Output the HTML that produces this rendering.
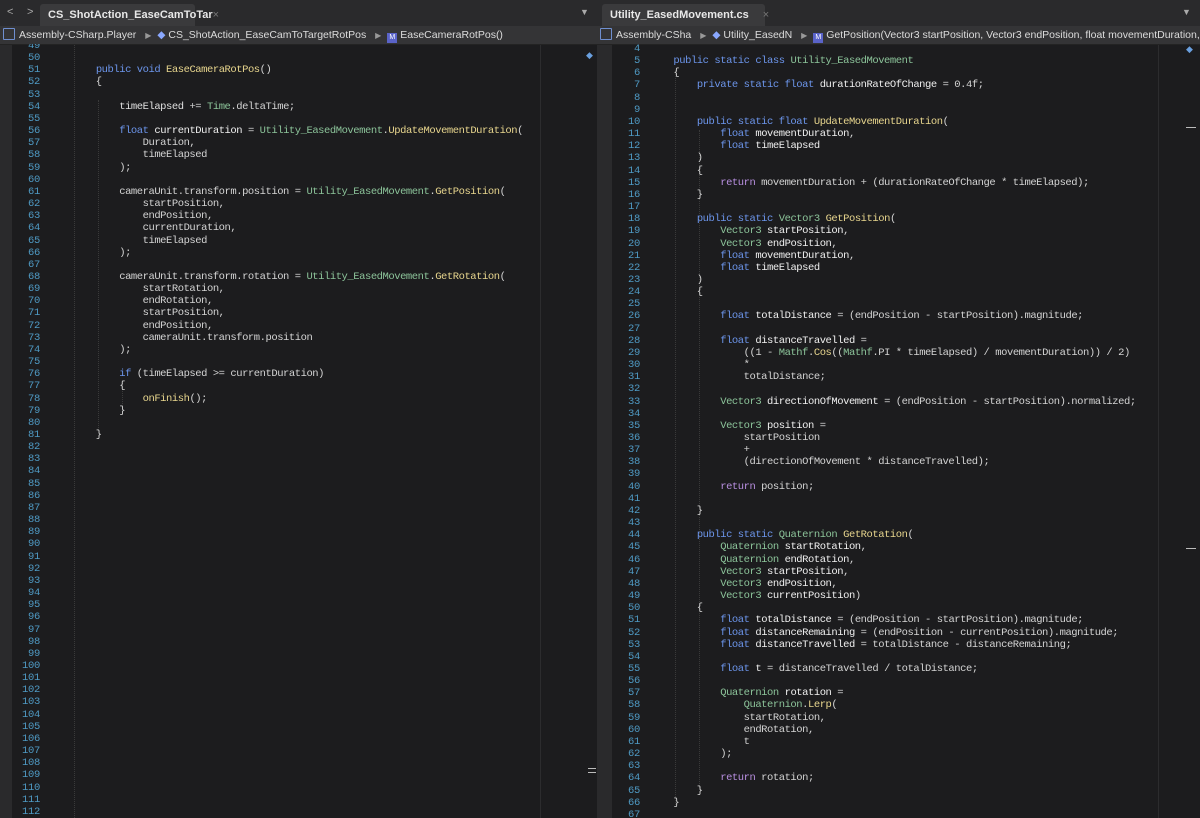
<!DOCTYPE html>
<html><head><meta charset="utf-8"><style>
body{margin:0;width:1200px;height:818px;overflow:hidden;background:#1c1c1e;font-family:"Liberation Sans",sans-serif;position:relative}
.abs{position:absolute}
.tabbar{top:0;height:26px;background:#2a2a2c;border-bottom:1px solid #1a1a1a}
.tab{top:4px;height:22px;background:#3a3a3c;color:#e8e8e8;font-size:11px;font-weight:bold;line-height:22px;padding-left:8px;box-sizing:border-box;border-radius:3px 3px 0 0}
.crumb{top:26px;height:18px;background:#343436;border-bottom:1px solid #232323;color:#dcdcdc;font-size:10.5px;line-height:18px;white-space:nowrap;overflow:hidden}
.code{font-family:"Liberation Mono",monospace;font-size:10.5px;letter-spacing:-0.45px;line-height:12.15px;white-space:pre;color:#d4d4d4}
.ln{color:#4f9ac4;text-align:right;font-family:"Liberation Mono",monospace;font-size:10.5px;letter-spacing:-0.3px;line-height:12.15px;white-space:pre}
.k{color:#6c95eb}.t{color:#8cc49a}.m{color:#e8d68e}.r{color:#b88fe0}.v{color:#f0f0f0}.n{color:#e0e0e0}
.guide{border-left:1px dotted #3a3a3a;width:0}
</style></head><body>
<div class="abs tabbar" style="left:0;width:597px"></div>
<div class="abs" style="left:7px;top:6px;color:#aaa;font-size:11px">&lt;</div>
<div class="abs" style="left:27px;top:6px;color:#aaa;font-size:11px">&gt;</div>
<div class="abs tab" style="left:40px;width:155px">CS_ShotAction_EaseCamToTar<span style="color:#777;font-weight:normal">×</span></div>
<div class="abs" style="left:580px;top:7px;color:#aaa;font-size:9px">▼</div>
<div class="abs tabbar" style="left:597px;width:603px"></div>
<div class="abs tab" style="left:602px;width:163px">Utility_EasedMovement.cs<span style="color:#777;font-weight:normal;margin-left:14px">×</span></div>
<div class="abs" style="left:1182px;top:7px;color:#aaa;font-size:9px">▼</div>
<div class="abs crumb" style="left:0;width:597px"><span style="display:inline-block;width:10px;height:10px;border:1px solid #6f8fd0;margin:0 4px 0 3px;vertical-align:-2px;border-radius:1px"></span>Assembly-CSharp.Player <span style="color:#999;font-size:8px;margin:0 6px">▶</span><span style="color:#8aa8ff">◆</span> CS_ShotAction_EaseCamToTargetRotPos <span style="color:#999;font-size:8px;margin:0 6px">▶</span><span style="display:inline-block;width:10px;height:10px;background:#5a63c8;color:#fff;font-size:7px;line-height:10px;text-align:center;vertical-align:-1px">M</span> EaseCameraRotPos()</div>
<div class="abs crumb" style="left:597px;width:603px"><span style="display:inline-block;width:10px;height:10px;border:1px solid #6f8fd0;margin:0 4px 0 3px;vertical-align:-2px;border-radius:1px"></span>Assembly-CSha <span style="color:#999;font-size:8px;margin:0 6px">▶</span><span style="color:#8aa8ff">◆</span> Utility_EasedN <span style="color:#999;font-size:8px;margin:0 6px">▶</span><span style="display:inline-block;width:10px;height:10px;background:#5a63c8;color:#fff;font-size:7px;line-height:10px;text-align:center;vertical-align:-1px">M</span> GetPosition(Vector3 startPosition, Vector3 endPosition, float movementDuration, float time</div>
<div class="abs" style="left:0;top:45px;width:12px;height:773px;background:#2a2a2c"></div>
<div class="abs" style="left:540px;top:45px;width:1px;height:773px;background:#2c2c2e"></div>
<div class="abs" style="left:597px;top:45px;width:15px;height:773px;background:#2a2a2c"></div>
<div class="abs" style="left:586px;top:50px;color:#6aa0e0;font-size:9px">◆</div>
<div class="abs" style="left:588px;top:768px;width:8px;height:1px;background:#bbb"></div>
<div class="abs" style="left:588px;top:772px;width:8px;height:1px;background:#bbb"></div>
<div class="abs guide" style="left:74px;top:45px;height:773px"></div>
<div class="abs guide" style="left:98px;top:100px;height:330px"></div>
<div class="abs guide" style="left:122px;top:380px;height:30px"></div>
<div style="position:absolute;left:0;top:44px;width:597px;height:774px;overflow:hidden">
<div class="abs ln" style="left:0;top:-4px;width:40px">49
50
51
52
53
54
55
56
57
58
59
60
61
62
63
64
65
66
67
68
69
70
71
72
73
74
75
76
77
78
79
80
81
82
83
84
85
86
87
88
89
90
91
92
93
94
95
96
97
98
99
100
101
102
103
104
105
106
107
108
109
110
111
112
113</div>
<div class="abs code" style="left:49px;top:-4px">

        <span class="k">public void</span> <span class="m">EaseCameraRotPos</span>()
        {

            <span class="n">timeElapsed</span> += <span class="t">Time</span>.deltaTime;

            <span class="k">float</span> <span class="v">currentDuration</span> = <span class="t">Utility_EasedMovement</span>.<span class="m">UpdateMovementDuration</span>(
                Duration,
                timeElapsed
            );

            cameraUnit.transform.position = <span class="t">Utility_EasedMovement</span>.<span class="m">GetPosition</span>(
                startPosition,
                endPosition,
                currentDuration,
                timeElapsed
            );

            cameraUnit.transform.rotation = <span class="t">Utility_EasedMovement</span>.<span class="m">GetRotation</span>(
                startRotation,
                endRotation,
                startPosition,
                endPosition,
                cameraUnit.transform.position
            );

            <span class="k">if</span> (timeElapsed &gt;= currentDuration)
            {
                <span class="m">onFinish</span>();
            }

        }</div>
</div>
<div class="abs" style="left:1158px;top:45px;width:1px;height:773px;background:#2c2c2e"></div>
<div class="abs" style="left:1186px;top:44px;color:#6aa0e0;font-size:9px">◆</div>
<div class="abs" style="left:1186px;top:127px;width:10px;height:1px;background:#bbb"></div>
<div class="abs" style="left:1186px;top:548px;width:10px;height:1px;background:#bbb"></div>
<div class="abs guide" style="left:675px;top:70px;height:735px"></div>
<div class="abs guide" style="left:699px;top:130px;height:660px"></div>
<div style="position:absolute;left:612px;top:44px;width:588px;height:774px;overflow:hidden">
<div class="abs ln" style="left:0;top:-1px;width:28px">4
5
6
7
8
9
10
11
12
13
14
15
16
17
18
19
20
21
22
23
24
25
26
27
28
29
30
31
32
33
34
35
36
37
38
39
40
41
42
43
44
45
46
47
48
49
50
51
52
53
54
55
56
57
58
59
60
61
62
63
64
65
66
67</div>
<div class="abs code" style="left:38px;top:-1px">
    <span class="k">public static class</span> <span class="t">Utility_EasedMovement</span>
    {
        <span class="k">private static float</span> <span class="v">durationRateOfChange</span> = 0.4f;


        <span class="k">public static float</span> <span class="m">UpdateMovementDuration</span>(
            <span class="k">float</span> <span class="v">movementDuration</span>,
            <span class="k">float</span> <span class="v">timeElapsed</span>
        )
        {
            <span class="r">return</span> movementDuration + (durationRateOfChange * timeElapsed);
        }

        <span class="k">public static</span> <span class="t">Vector3</span> <span class="m">GetPosition</span>(
            <span class="t">Vector3</span> <span class="v">startPosition</span>,
            <span class="t">Vector3</span> <span class="v">endPosition</span>,
            <span class="k">float</span> <span class="v">movementDuration</span>,
            <span class="k">float</span> <span class="v">timeElapsed</span>
        )
        {

            <span class="k">float</span> <span class="v">totalDistance</span> = (endPosition - startPosition).magnitude;

            <span class="k">float</span> <span class="v">distanceTravelled</span> =
                ((1 - <span class="t">Mathf</span>.<span class="m">Cos</span>((<span class="t">Mathf</span>.PI * timeElapsed) / movementDuration)) / 2)
                *
                totalDistance;

            <span class="t">Vector3</span> <span class="v">directionOfMovement</span> = (endPosition - startPosition).normalized;

            <span class="t">Vector3</span> <span class="v">position</span> =
                startPosition
                +
                (directionOfMovement * distanceTravelled);

            <span class="r">return</span> position;

        }

        <span class="k">public static</span> <span class="t">Quaternion</span> <span class="m">GetRotation</span>(
            <span class="t">Quaternion</span> <span class="v">startRotation</span>,
            <span class="t">Quaternion</span> <span class="v">endRotation</span>,
            <span class="t">Vector3</span> <span class="v">startPosition</span>,
            <span class="t">Vector3</span> <span class="v">endPosition</span>,
            <span class="t">Vector3</span> <span class="v">currentPosition</span>)
        {
            <span class="k">float</span> <span class="v">totalDistance</span> = (endPosition - startPosition).magnitude;
            <span class="k">float</span> <span class="v">distanceRemaining</span> = (endPosition - currentPosition).magnitude;
            <span class="k">float</span> <span class="v">distanceTravelled</span> = totalDistance - distanceRemaining;

            <span class="k">float</span> <span class="v">t</span> = distanceTravelled / totalDistance;

            <span class="t">Quaternion</span> <span class="v">rotation</span> =
                <span class="t">Quaternion</span>.<span class="m">Lerp</span>(
                startRotation,
                endRotation,
                t
            );

            <span class="r">return</span> rotation;
        }
    }</div>
</div>
</body></html>
